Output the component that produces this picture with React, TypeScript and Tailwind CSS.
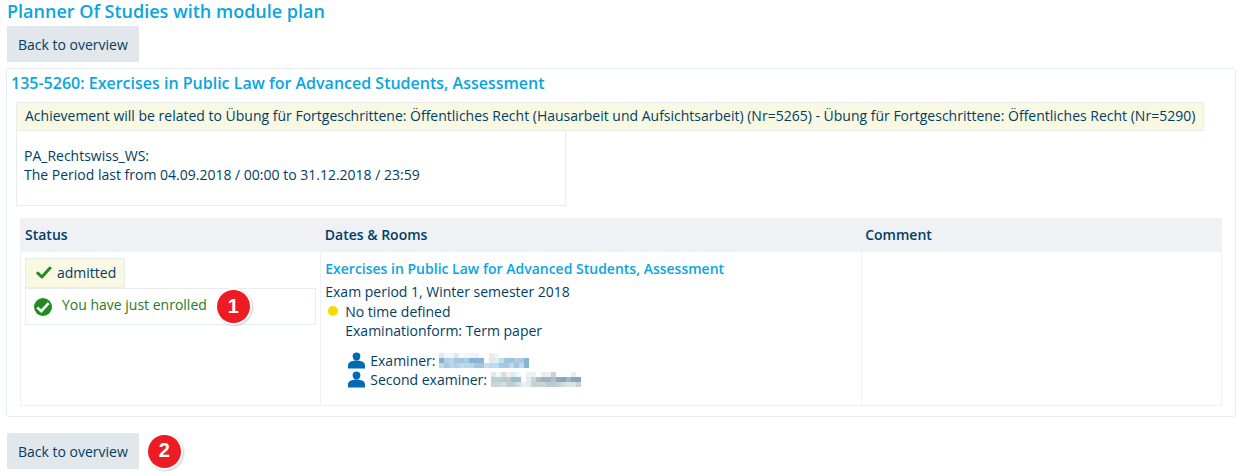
const ROOM_TITLE = 'Exercises in Public Law for Advanced Students, Assessment'

const CELL = 5

const examinerCells = [
  ['#dbeaf3', '#f3f7f9', '#f0f5f7', '#dde9f0', '#fafafa', '#f0f7fa', '#f3f3f3', '#eaf3f8', '', '', '#f5e9e6', '#e6f7fd', '', '', '', '', '', ''],
  ['#85afd1', '#b3cfe2', '#b7d6e8', '#a4c6de', '#a3c3dc', '#a9cde2', '#86b3d3', '#8cb5d3', '#8ab4d4', '', '#efe3e8', '#d9effa', '#c5dbe8', '#9fc6e0', '#9fbfdc', '#b0cbdd', '#a9cbe2', '#84b5d6'],
  ['#c0d6e5', '#a0cbe6', '#b4d7e9', '#add2e9', '#c0d9e9', '#b6d8eb', '#b9d5e9', '#9fc9e3', '#9cc8e3', '#c6deeb', '#bdd8e8', '#b6dcf2', '#a3cbe6', '#a5c6df', '#b8dcef', '#9cc3df', '#c6d6e6', '#84b5d6'],
]

const secondExaminerCells = [
  ['#e2e8e9', '#f3f9fa', '#d7dfe2', '#f7eeee', '#dcecf2', '#ebfaff', '', '#eaf1f3', '#f3f0ef', '', '#e7f0f5', '#f7eeea', '#c4d5dc', '', '', '', '#e6edf0', ''],
  ['#c2cdd0', '#b9ced0', '#b5cad2', '#bccbcf', '#a5bac2', '#9cbfcd', '', '#e6eaeb', '#c4d8de', '#a9bfc8', '#9fb3bd', '#9eb3bc', '#a9c0ca', '#8fa9b5', '#83a8b8', '#a3b9c3', '#8fa9b3', '#87a8b6'],
  ['#c9d5d5', '#cbd6d7', '#d6dcdd', '#bfced1', '#bed0d5', '#cbdfe6', '#eeeeee', '#e6eaeb', '#c6d3d6', '#c4d2d6', '#c9d5d8', '#bccbd0', '#b8cbd2', '#c4d1d4', '#d3dcde', '#dbe3e3', '#dbe3e3', '#c6d3d6'],
]

function RedactedName({ cells, label }: { cells: string[][]; label: string }) {
  return (
    <svg className="h-[15px] w-[90px]" viewBox="0 0 90 15" shapeRendering="crispEdges" role="img" aria-label={label}>
      {cells.map((row, y) =>
        row.map((fill, x) =>
          fill ? <rect key={`${x}-${y}`} x={x * CELL} y={y * CELL} width={CELL} height={CELL} fill={fill} /> : null
        )
      )}
    </svg>
  )
}

function PersonIcon() {
  return (
    <svg className="h-[17px] w-[17px]" viewBox="0 0 17 17" fill="#006ab3" aria-hidden="true">
      <path d="M8.500 .5C10.900 .5 12.400 1.900 12.400 4.100C12.400 5.900 11.400 7.900 10 8.600H7C5.600 7.900 4.600 5.900 4.600 4.100C4.600 1.900 6.100 .5 8.500 .5Z" />
      <path d="M4 9.200C6.500 8.400 10.500 8.400 13 9.200C15.500 9.800 17 11 17 13.500V16.500H0V13.500C0 11 1.500 9.800 4 9.200Z" />
    </svg>
  )
}

function CheckIcon() {
  return (
    <svg className="h-4 w-4" viewBox="0 0 16 16" fill="none" stroke="#228b22" strokeWidth="3" strokeLinejoin="round" strokeLinecap="round" aria-hidden="true">
      <path d="M1.800 8.200L5.900 12L14 3" />
    </svg>
  )
}

function CheckCircleIcon() {
  return (
    <svg className="h-[18px] w-[18px]" viewBox="0 0 18 18" fill="none" aria-hidden="true">
      <circle cx="9" cy="9" r="9" fill="#228b22" />
      <path d="M3.200 9.500L7.300 13.200L14.600 5.200" stroke="#fff" strokeWidth="2.600" />
    </svg>
  )
}

function StepBadge({ step }: { step: number }) {
  return (
    <span className="flex h-[33px] w-[33px] shrink-0 items-center justify-center rounded-full bg-[#ed1c24] pb-[2px] font-['Liberation_Sans',sans-serif] text-[20px] font-bold leading-none text-white shadow-[0_0_0_2px_#fff,1px_1px_2px_2px_#cfcfcf]">
      {step}
    </span>
  )
}

function BackButton() {
  return (
    <button type="button" className="h-9 rounded-[1px] bg-[#e2e7eb] px-[11px] pt-[2px] text-sm">
      Back to overview
    </button>
  )
}

export default function App() {
  return (
    <main className="bg-white pr-[5px] pb-[7px] pl-[6px] font-['Open_Sans',sans-serif] text-sm text-[#003e65]">
      <div className="pl-px">
        <h1 className="pb-1 text-lg leading-[22px] font-semibold text-[#08a5e0]">Planner Of Studies with module plan</h1>
        <BackButton />
      </div>

      <section className="mt-[6px] rounded-[3px] border border-[#e7ecee] px-[9px] pt-1 pb-[10px]">
        <h2 className="-ml-[5px] text-base leading-5 font-semibold text-[#08a5e0]">
          135-5260: Exercises in Public Law for Advanced Students, Assessment
        </h2>

        <div className="mt-[9px] w-fit border border-[#e7ecee] bg-[#f9f9e3] px-2 pt-[3px] pb-[5px] leading-[19px]">
          Achievement will be related to Übung für Fortgeschrittene: Öffentliches Recht (Hausarbeit und Aufsichtsarbeit)
          (Nr=5265) - Übung für Fortgeschrittene: Öffentliches Recht (Nr=5290)
        </div>
        <div className="w-full max-w-[550px] border border-t-0 border-[#e7ecee] px-[7px] pt-[15px] pb-[21px] leading-[19px]">
          <p>PA_Rechtswiss_WS:</p>
          <p>The Period last from 04.09.2018 / 00:00 to 31.12.2018 / 23:59</p>
        </div>

        <div className="mx-1 mt-3">
          <table className="w-full table-fixed border-collapse border border-[#f0f1f5] text-left">
            <thead className="bg-[#f0f1f5]">
              <tr className="h-[33px]">
                <th scope="col" className="w-[25%] px-1 font-semibold">Status</th>
                <th scope="col" className="w-[45%] px-1 font-semibold">Dates &amp; Rooms</th>
                <th scope="col" className="w-[30%] px-1 font-semibold">Comment</th>
              </tr>
            </thead>
            <tbody>
              <tr className="align-top">
                <td className="border border-[#f0f1f5] px-1 pt-[6px]">
                  <div className="flex h-[30px] w-fit items-center gap-[5px] border border-[#e7ecee] bg-[#f9f9e3] pr-2 pl-[10px]">
                    <CheckIcon />
                    <span>admitted</span>
                  </div>
                  <div className="flex h-[37px] items-center border border-[#e7ecee] pl-2 text-[#1e7d1e]">
                    <CheckCircleIcon />
                    <span className="mr-[10px] ml-[10px] pb-[3px]">You have just enrolled</span>
                    <StepBadge step={1} />
                  </div>
                </td>
                <td className="border border-[#f0f1f5] px-1 pt-[5px] pb-4">
                  <h3 className="leading-6 font-semibold text-[#08a5e0]">
                    {ROOM_TITLE}
                  </h3>
                  <p className="leading-[21px]">Exam period 1, Winter semester 2018</p>
                  <div className="flex">
                    <span className="mt-[4px] mr-[7px] ml-[3px] h-[10px] w-[10px] rounded-full bg-[#ffd700]" />
                    <div className="leading-[19px]">
                      <p>No time defined</p>
                      <p>Examinationform: Term paper</p>
                      <ul className="mt-[11px] ml-[3px]">
                        <li className="flex items-center">
                          <PersonIcon />
                          <span className="mr-1 ml-[5px]">Examiner:</span>
                          <RedactedName cells={examinerCells} label="Name hidden" />
                        </li>
                        <li className="flex items-center">
                          <PersonIcon />
                          <span className="mr-1 ml-[5px]">Second examiner:</span>
                          <RedactedName cells={secondExaminerCells} label="Name hidden" />
                        </li>
                      </ul>
                    </div>
                  </div>
                </td>
                <td className="border border-[#f0f1f5]" />
              </tr>
            </tbody>
          </table>
        </div>
      </section>

      <div className="mt-4 flex items-center gap-[9px] pl-px">
        <BackButton />
        <StepBadge step={2} />
      </div>
    </main>
  )
}
